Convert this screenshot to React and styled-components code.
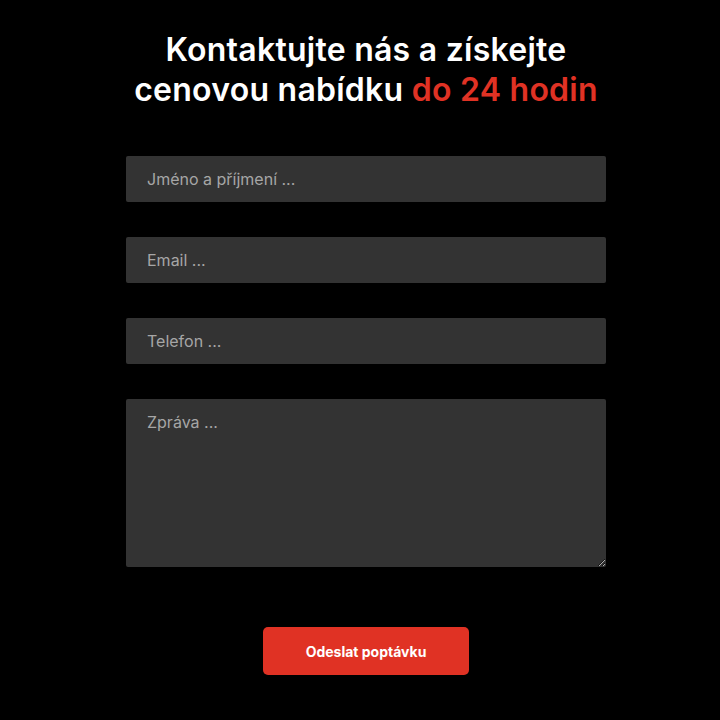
import React from 'react';
import styled, { createGlobalStyle } from 'styled-components';

const Global = createGlobalStyle`
    html, body {
        margin: 0;
        padding: 0;
        background: #000;
    }
    body {
        font-family: Inter, "Noto Sans", sans-serif;
    }
`;

const App = () => {
    return (
        <>
            <Global />
            <Section>
                <Title>
                    Kontaktujte nás a získejte<br />
                    cenovou nabídku <Accent>do 24 hodin</Accent>
                </Title>
                <Form onSubmit={ (e) => e.preventDefault() }>
                    <Field type='text' placeholder='Jméno a příjmení ...' />
                    <Field type='email' placeholder='Email ...' />
                    <Field type='tel' placeholder='Telefon ...' />
                    <Message placeholder='Zpráva ...' />
                    <Submit type='submit'>Odeslat poptávku</Submit>
                </Form>
            </Section>
        </>
    );
};

export default App;

const Section = styled.div`
    width: 720px;
    height: 720px;
    display: flex;
    flex-direction: column;
    align-items: center;
    padding-top: 30px;
    padding-left: 12px;
    box-sizing: border-box;
    color: #fff;
`;
const Title = styled.h1`
    margin: 0;
    font-size: 32px;
    font-weight: 600;
    line-height: 40px;
    text-align: center;
    letter-spacing: 0.25px;
`;
const Accent = styled.span`
    color: #e03224;
`;
const Form = styled.form`
    width: 480px;
    margin-top: 46px;
    display: flex;
    flex-direction: column;
    gap: 35px;
`;
const inputBase = `
    width: 100%;
    box-sizing: border-box;
    background-color: #333333;
    border: none;
    border-radius: 2px;
    color: #fff;
    font-family: Inter, "Noto Sans", sans-serif;
    font-size: 16px;
    outline: none;
    padding: 0 21px;

    &::placeholder{
        color: #a6a6a6;
    }
`;
const Field = styled.input`
    ${ inputBase }
    height: 46px;
`;
const Message = styled.textarea`
    ${ inputBase }
    height: 168px;
    padding-top: 13px;
    resize: vertical;
    line-height: 20px;
`;
const Submit = styled.button`
    align-self: center;
    width: 206px;
    height: 48px;
    margin-top: 25px;
    border: none;
    border-radius: 5px;
    background-color: #e03224;
    color: #fff;
    font-family: Inter, "Noto Sans", sans-serif;
    font-size: 14px;
    font-weight: 700;
    cursor: pointer;
`;
